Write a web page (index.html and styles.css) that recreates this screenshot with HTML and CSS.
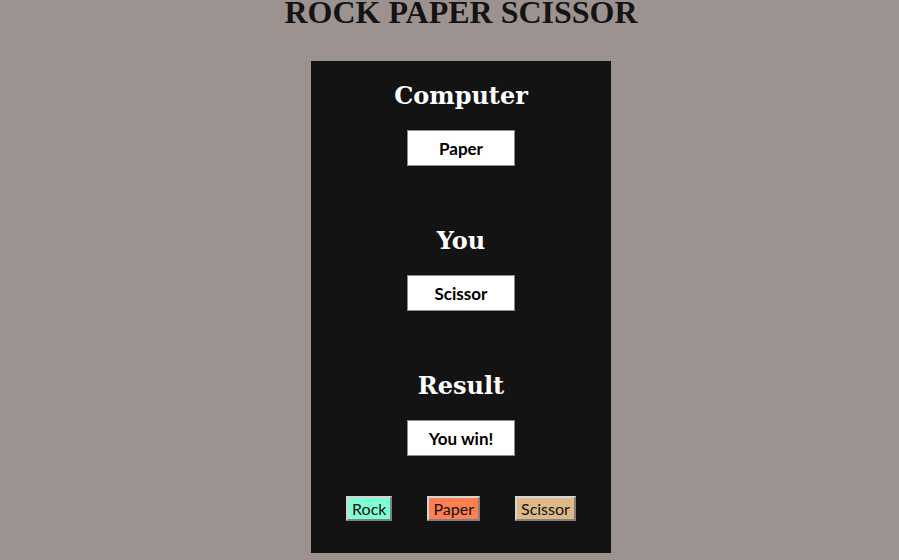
FILE: index.html
```html
<!DOCTYPE html>
<html>
<head>
<meta charset="utf-8">
<link rel="stylesheet" href="styles.css">
</head>
<body>
<h1 class="title">ROCK PAPER SCISSOR</h1>
<div class="panel">
  <div class="section">
    <h2 class="label">Computer</h2>
    <div class="box">Paper</div>
  </div>
  <div class="section">
    <h2 class="label">You</h2>
    <div class="box">Scissor</div>
  </div>
  <div class="section">
    <h2 class="label">Result</h2>
    <div class="box">You win!</div>
  </div>
  <div class="controls">
    <button class="btn rock">Rock</button>
    <button class="btn paper">Paper</button>
    <button class="btn scissor">Scissor</button>
  </div>
</div>
</body>
</html>
```
FILE: styles.css
```css
body {
  margin: 0 0 0 23px;
  background: #9c9391;
}
.title {
  margin: 0;
  text-align: center;
  font-family: "Liberation Serif", serif;
  font-weight: bold;
  font-size: 32px;
  line-height: 24px;
  color: #141414;
}
.panel {
  width: 300px;
  margin: 37px auto 0;
  background: #131313;
  padding: 21px 0 32px;
  display: flex;
  flex-direction: column;
  align-items: center;
}
.section {
  display: flex;
  flex-direction: column;
  align-items: center;
  height: 145px;
}
.label {
  margin: 0;
  font-family: "DejaVu Serif", serif;
  font-weight: bold;
  font-size: 24px;
  line-height: 28px;
  color: #fff;
}
.box {
  margin-top: 20px;
  width: 106px;
  height: 34px;
  background: #fff;
  border: 1px solid #8a8a90;
  font-family: Lato, sans-serif;
  font-weight: bold;
  font-size: 17px;
  color: #000;
  display: flex;
  align-items: center;
  justify-content: center;
}
.controls {
  margin-top: -21px;
  display: flex;
  gap: 35px;
}
.btn {
  font-family: Lato, sans-serif;
  font-size: 16px;
  height: 25px;
  padding: 0 4px;
  border: 2px outset #d4d4d4;
  color: #111;
}
.rock { background: #7fffd4; }
.paper { background: #ff7f50; }
.scissor { background: #deb887; }
```
